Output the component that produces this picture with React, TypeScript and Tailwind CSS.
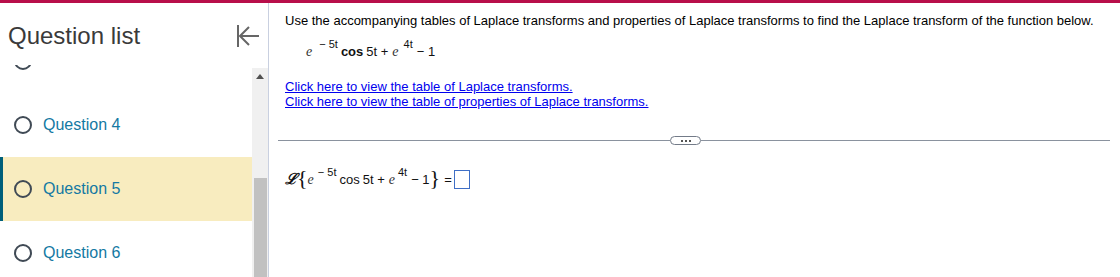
function Circle() {
  return <span className="inline-block w-[18px] h-[18px] rounded-full border-2 border-[#404a55] shrink-0" />
}

function Item({ label, active }: { label?: string; active?: boolean }) {
  return (
    <div
      className={
        active
          ? 'h-[64px] flex items-center gap-[11px] pl-[11px] bg-[#f8ecbf] border-l-[3px] border-[#005f7a]'
          : 'h-[64px] flex items-center gap-[11px] pl-[14px]'
      }
    >
      <Circle />
      {label && <span className="text-[16px] text-[#1479a3]">{label}</span>}
    </div>
  )
}

function Sup({ children, gap = 'ml-[3px]' }: { children: React.ReactNode; gap?: string }) {
  return <span className={'relative -top-[8px] text-[11px] ' + gap}>{children}</span>
}

function E() {
  return <span className="italic text-[14px] text-[#333]" style={{ fontFamily: '"Liberation Serif", serif' }}>e</span>
}

export default function App() {
  return (
    <div className="w-[1120px] h-[277px] bg-white overflow-hidden flex flex-col" style={{ fontFamily: '"Liberation Sans", Arial, sans-serif' }}>
      <div className="h-[3px] bg-[#b80f4a] shrink-0" />
      <div className="flex flex-1 min-h-0">
        {/* sidebar */}
        <div className="w-[269px] border-r border-[#c9d0e0] flex flex-col shrink-0">
          <div className="h-[62px] flex items-center justify-between pl-[8px] pr-[8px] shrink-0">
            <span className="text-[24px] text-[#3a3a3a] mt-[3px]">Question list</span>
            <svg width="24" height="24" viewBox="0 0 24 24" className="mt-[3px]" fill="none" stroke="#666" strokeWidth="2">
              <path d="M2 1v22" />
              <path d="M4 12h19" />
              <path d="M13 3l-9 9 9 9" />
            </svg>
          </div>
          <div className="flex flex-1 min-h-0">
            <div className="flex-1 overflow-hidden">
              <div className="-mt-[36px]">
                <Item />
                <Item label="Question 4" />
                <Item label="Question 5" active />
                <Item label="Question 6" />
              </div>
            </div>
            <div className="w-[16px] mt-[3px] bg-[#f0f0f0] flex flex-col items-center">
              <div className="h-[16px] flex items-center justify-center">
                <svg width="8" height="5" viewBox="0 0 8 5"><path d="M0 5L4 0L8 5Z" fill="#505050" /></svg>
              </div>
              <div className="h-[94px]" />
              <div className="w-[13px] flex-1 bg-[#c1c1c1]" />
            </div>
          </div>
        </div>
        {/* content */}
        <div className="flex-1 pl-[16px] pr-[10px] text-[13px] text-black">
          <p className="mt-[10px] leading-[15px]">
            Use the accompanying tables of Laplace transforms and properties of Laplace transforms to find the Laplace transform of the function below.
          </p>
          <div className="mt-[13px] ml-[21px] flex items-baseline text-[13px] text-[#111]">
            <E />
            <Sup gap="ml-[7px]">− 5t</Sup>
            <span className="ml-[3px] font-bold">cos</span>
            <span className="ml-[3px]">5t +</span>
            <span className="ml-[4px]"><E /></span>
            <Sup gap="ml-[5px]">4t</Sup>
            <span className="ml-[4px]">− 1</span>
          </div>
          <div className="mt-[17px] leading-[15px]">
            <a className="block text-[#0000ee] underline">Click here to view the table of Laplace transforms.</a>
            <a className="block text-[#0000ee] underline">Click here to view the table of properties of Laplace transforms.</a>
          </div>
          <div className="mt-[27px] -ml-[7px] flex items-center">
            <div className="w-[392px] h-px bg-[#8a929e]" />
            <div className="w-[31px] h-[9px] rounded-full border border-[#737b88] flex items-center justify-center gap-[2px]">
              <span className="w-[2px] h-[2px] bg-[#555]" />
              <span className="w-[2px] h-[2px] bg-[#555]" />
              <span className="w-[2px] h-[2px] bg-[#555]" />
            </div>
            <div className="flex-1 h-px bg-[#8a929e]" />
          </div>
          <div className="mt-[23px] flex items-center text-[13px] text-[#111]">
            <span className="text-[15px] italic font-bold" style={{ fontFamily: '"DejaVu Serif", serif' }}>ℒ</span>
            <span className="text-[22px] leading-none -mt-[3px]" style={{ fontFamily: '"Liberation Serif", serif' }}>{'{'}</span>
            <span className="flex items-baseline">
              <E />
              <Sup gap="ml-[4px]">− 5t</Sup>
              <span className="ml-[3px]">cos</span>
              <span className="ml-[3px]">5t +</span>
              <span className="ml-[4px]"><E /></span>
              <Sup gap="ml-[3px]">4t</Sup>
              <span className="ml-[4px]">− 1</span>
            </span>
            <span className="text-[22px] leading-none -mt-[3px]" style={{ fontFamily: '"Liberation Serif", serif' }}>{'}'}</span>
            <span className="ml-[4px]">=</span>
            <span className="ml-[2px] w-[16px] h-[19px] border border-[#3f6fc6]" />
          </div>
        </div>
      </div>
    </div>
  )
}
